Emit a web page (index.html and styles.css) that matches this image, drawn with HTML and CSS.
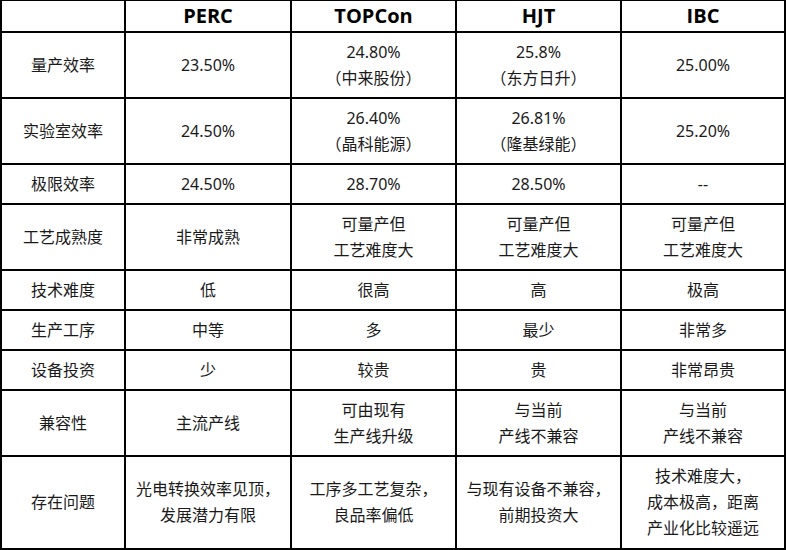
FILE: index.html
```html
<!DOCTYPE html>
<html lang="zh-CN">
<head>
<meta charset="utf-8">
<title>电池技术对比</title>
<link rel="stylesheet" href="styles.css">
</head>
<body>
<table class="cmp">
  <thead>
    <tr>
      <th class="c-label"></th>
      <th class="c-a">PERC</th>
      <th class="c-b">TOPCon</th>
      <th class="c-b">HJT</th>
      <th class="c-c">IBC</th>
    </tr>
  </thead>
  <tbody>
    <tr><td>量产效率</td><td>23.50%</td><td>24.80%<br>（中来股份）</td><td>25.8%<br>（东方日升）</td><td>25.00%</td></tr>
    <tr><td>实验室效率</td><td>24.50%</td><td>26.40%<br>（晶科能源）</td><td>26.81%<br>（隆基绿能）</td><td>25.20%</td></tr>
    <tr><td>极限效率</td><td>24.50%</td><td>28.70%</td><td>28.50%</td><td>--</td></tr>
    <tr><td>工艺成熟度</td><td>非常成熟</td><td>可量产但<br>工艺难度大</td><td>可量产但<br>工艺难度大</td><td>可量产但<br>工艺难度大</td></tr>
    <tr><td>技术难度</td><td>低</td><td>很高</td><td>高</td><td>极高</td></tr>
    <tr><td>生产工序</td><td>中等</td><td>多</td><td>最少</td><td>非常多</td></tr>
    <tr><td>设备投资</td><td>少</td><td>较贵</td><td>贵</td><td>非常昂贵</td></tr>
    <tr><td>兼容性</td><td>主流产线</td><td>可由现有<br>生产线升级</td><td>与当前<br>产线不兼容</td><td>与当前<br>产线不兼容</td></tr>
    <tr class="tall"><td>存在问题</td><td>光电转换效率见顶，<br>发展潜力有限</td><td>工序多工艺复杂，<br>良品率偏低</td><td>与现有设备不兼容，<br>前期投资大</td><td>技术难度大，<br>成本极高，距离<br>产业化比较遥远</td></tr>
  </tbody>
</table>
</body>
</html>
```
FILE: styles.css
```css
* { box-sizing: border-box; }
html, body {
  margin: 0;
  padding: 0;
  background: #ffffff;
}
body {
  font-family: "Noto Sans", "Noto Sans CJK SC", sans-serif;
  font-size: 16px;
  color: #1a1a1a;
}
.cmp {
  width: 786px;
  table-layout: fixed;
  border-collapse: separate;
  border-spacing: 0;
  border-left: 2px solid #000;
  border-top: 1px solid #000;
}
.cmp th,
.cmp td {
  border-right: 2px solid #000;
  border-bottom: 2px solid #000;
  text-align: center;
  vertical-align: middle;
  padding: 6px 2px;
  line-height: 26px;
  font-weight: normal;
}
.cmp th {
  font-family: "Open Sans", "Noto Sans", sans-serif;
  font-weight: 700;
  font-size: 20px;
  color: #000;
  padding: 2px 2px;
  height: 32px;
}
.c-label { width: 124px; }
.c-a { width: 166px; }
.c-b { width: 165px; }
.c-c { width: 164px; }
.tall td { padding: 6px 2px 7px; }
```
